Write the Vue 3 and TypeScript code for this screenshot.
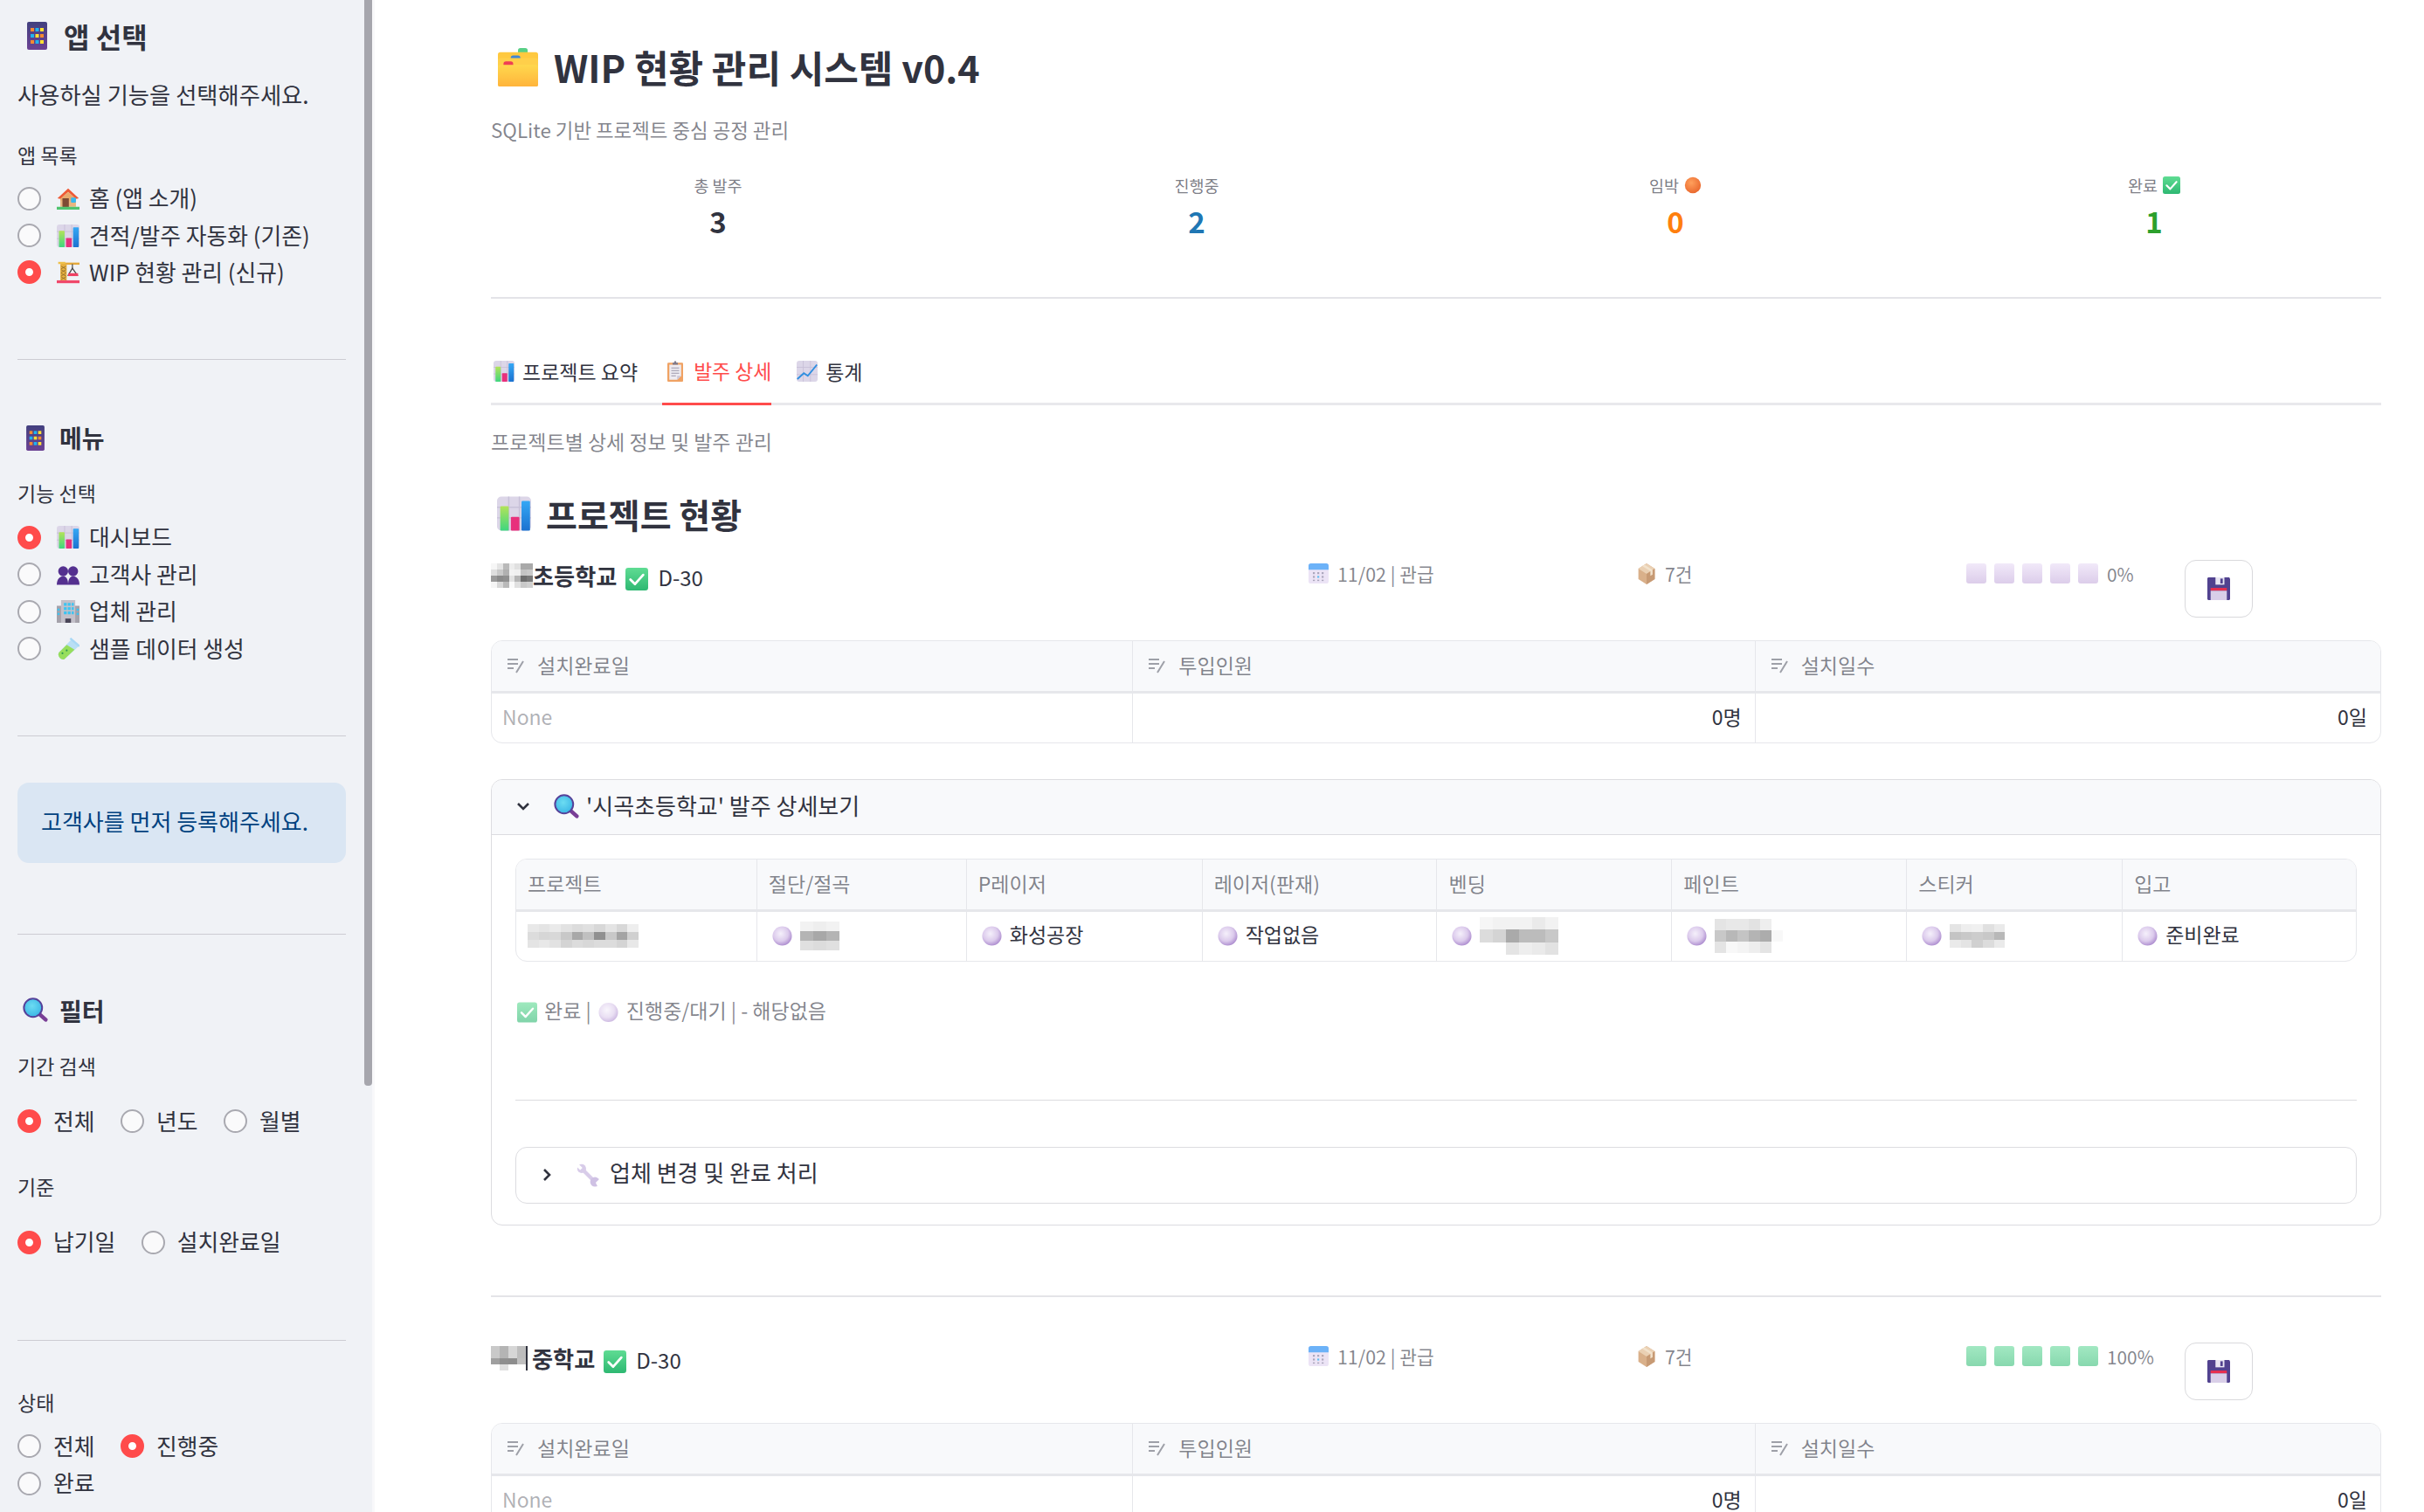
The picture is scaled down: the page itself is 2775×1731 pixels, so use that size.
<script setup lang="ts">
interface Mosaic { cols: number; w: number; h: number; cells: string[] }
const g = (v: string[]) => v.map((c) => '#' + c + c + c)

const nameA: Mosaic = { cols: 7, w: 48, h: 28, cells: g([
  'f6','e4','b9','ec','e0','a9','a9',
  'de','c9','b0','f3','f0','c4','c9',
  '9a','8a','8f','e2','b5','6e','7a',
  'f5','d8','b9','fa','e0','c9','d0']) }
const nameB: Mosaic = { cols: 4, w: 40, h: 28, cells: g([
  'c9','b4','d6','bd',
  'c9','b4','d6','bd',
  '9f','8f','8d','c0',
  'ff','e0','ff','ff']) }
const cProject: Mosaic = { cols: 10, w: 127, h: 27, cells: g([
  'e8','e4','ea','e2','dc','e0','d8','e4','d8','ee',
  'dc','d6','d8','c8','a8','c0','90','c8','a4','d0',
  'e4','e8','e2','d4','dc','d8','dc','dc','d4','e8']) }
const cCut: Mosaic = { cols: 3, w: 45, h: 33, cells: g([
  'f2','ee','f2',
  'b4','a8','b4',
  'e0','dc','e0']) }
const cBend: Mosaic = { cols: 6, w: 90, h: 43, cells: g([
  'f6','f2','f2','f2','ea','f2',
  'dc','d4','aa','bc','bc','c8',
  'ff','ff','e4','ee','ea','e2']) }
const cPaint: Mosaic = { cols: 6, w: 78, h: 39, cells: g([
  'e4','e8','e8','e2','ee','ff',
  'c8','b8','c4','b4','ac','f8',
  'e4','f8','f4','ee','e4','ff']) }
const cSticker: Mosaic = { cols: 5, w: 63, h: 27, cells: g([
  'e4','ee','f0','e0','ea',
  'c4','c8','cc','c8','b8',
  'ea','e4','d0','dc','ea']) }

interface StageCell { label: string; text?: string; mosaic?: Mosaic; icon?: boolean }
const stages: StageCell[] = [
  { label: '프로젝트', mosaic: cProject },
  { label: '절단/절곡', mosaic: cCut, icon: true },
  { label: 'P레이저', text: '화성공장', icon: true },
  { label: '레이저(판재)', text: '작업없음', icon: true },
  { label: '벤딩', mosaic: cBend, icon: true },
  { label: '페인트', mosaic: cPaint, icon: true },
  { label: '스티커', mosaic: cSticker, icon: true },
  { label: '입고', text: '준비완료', icon: true },
]
const summaryCols = ['설치완료일', '투입인원', '설치일수']
const metrics = [
  { label: '총 발주', value: '3', cls: 'v-dark' },
  { label: '진행중', value: '2', cls: 'v-blue' },
  { label: '임박', value: '0', cls: 'v-orange', icon: 'orange' },
  { label: '완료', value: '1', cls: 'v-green', icon: 'check' },
]
const mosaicStyle = (m: Mosaic) => ({
  width: m.w + 'px',
  height: m.h + 'px',
  gridTemplateColumns: `repeat(${m.cols}, 1fr)`,
})
</script>

<template>
  <div class="page">
    <svg class="defs" aria-hidden="true">
      <defs>
        <linearGradient id="gAb" x1="0" y1="0" x2="0" y2="1"><stop offset="0" stop-color="#42407f"/><stop offset="1" stop-color="#6b4193"/></linearGradient>
        <linearGradient id="gGreen" x1="0" y1="0" x2="0" y2="1"><stop offset="0" stop-color="#5fdc93"/><stop offset="1" stop-color="#2eb872"/></linearGradient>
        <linearGradient id="gBlue" x1="0" y1="0" x2="0" y2="1"><stop offset="0" stop-color="#35a8f5"/><stop offset="1" stop-color="#1b72d0"/></linearGradient>
        <linearGradient id="gLime" x1="0" y1="0" x2="0" y2="1"><stop offset="0" stop-color="#b2e35a"/><stop offset="1" stop-color="#3fd67f"/></linearGradient>
        <linearGradient id="gFolder" x1="0" y1="0" x2="0" y2="1"><stop offset="0" stop-color="#ffd84d"/><stop offset="1" stop-color="#ffb43c"/></linearGradient>
        <radialGradient id="gPurple" cx=".42" cy=".38" r=".65"><stop offset="0" stop-color="#f5f0fb"/><stop offset=".6" stop-color="#dccbec"/><stop offset="1" stop-color="#ab8ace"/></radialGradient>
        <radialGradient id="gOrange" cx=".4" cy=".35" r=".7"><stop offset="0" stop-color="#ffa05c"/><stop offset="1" stop-color="#e9662c"/></radialGradient>
        <radialGradient id="gGlass" cx=".45" cy=".4" r=".6"><stop offset="0" stop-color="#6cdcf2"/><stop offset="1" stop-color="#3cb7e6"/></radialGradient>
      </defs>
      <symbol id="abacus" viewBox="0 0 23 32">
        <rect width="23" height="32" rx="2" fill="url(#gAb)"/>
        <g><rect x="4" y="7" width="4" height="4" fill="#f58a32"/><rect x="9.5" y="7" width="4" height="4" fill="#1fb4ef"/><rect x="15" y="7" width="4" height="4" fill="#ffe033"/>
        <rect x="4" y="14" width="4" height="4" fill="#1fb4ef"/><rect x="9.5" y="14" width="4" height="4" fill="#ffe033"/><rect x="15" y="14" width="4" height="4" fill="#f58a32"/>
        <rect x="4" y="21" width="4" height="4" fill="#f58a32"/><rect x="9.5" y="21" width="4" height="4" fill="#1fb4ef"/><rect x="15" y="21" width="4" height="4" fill="#ffe033"/></g>
      </symbol>
      <symbol id="house" viewBox="0 0 32 32">
        <rect x="5" y="13" width="22" height="15" fill="#e8b57f"/>
        <path d="M16 2 L31 16 L27 17 L16 7 L5 17 L1 16 Z" fill="#ee5a36"/>
        <path d="M16 7 L27 17 L27 19 L5 19 L5 17 Z" fill="#e9aa6e"/>
        <rect x="8" y="16" width="9" height="13" fill="#7e4a34"/>
        <rect x="20" y="15" width="7" height="7" rx="1" fill="#37b8ee"/>
        <rect x="0" y="28" width="32" height="4" fill="#4fc46e"/>
      </symbol>
      <symbol id="bars" viewBox="0 0 32 32">
        <rect width="32" height="32" rx="4" fill="#dcd6e8"/>
        <path d="M0 10H32M0 20H32M11 0V32M21 0V32" stroke="#c8c1d8" stroke-width="1.2"/>
        <rect x="3" y="9" width="8" height="23" rx="1" fill="url(#gLime)"/>
        <rect x="13" y="19" width="8" height="13" rx="1" fill="#e8307c"/>
        <rect x="23" y="4" width="8" height="28" rx="1" fill="url(#gBlue)"/>
      </symbol>
      <symbol id="crane" viewBox="0 0 32 32">
        <rect x="6" y="2" width="26" height="3" fill="#e4a93c"/>
        <rect x="2" y="1" width="10" height="3" fill="#eec04a"/>
        <rect x="5" y="4" width="9" height="23" fill="#e8b13f"/>
        <path d="M6 7l7 4M13 7l-7 4M6 12l7 4M13 12l-7 4M6 17l7 4M13 17l-7 4M6 22l7 4M13 22l-7 4" stroke="#8c6a2c" stroke-width="1"/>
        <path d="M22 4V10" stroke="#555" stroke-width="1.6"/>
        <path d="M22 10L16 20H29Z" fill="none" stroke="#444" stroke-width="1.5"/>
        <rect x="16" y="17" width="14" height="4" fill="#ef4063"/>
        <rect x="0" y="27" width="32" height="4" fill="#f0486a"/>
      </symbol>
      <symbol id="people" viewBox="0 0 32 32">
        <g fill="#54308f"><circle cx="9" cy="11" r="7"/><circle cx="23" cy="11" r="7"/>
        <path d="M0 30 C0 21 5 18 9 18 C13 18 16 21 16 30Z"/><path d="M16 30 C16 21 19 18 23 18 C27 18 32 21 32 30Z"/></g>
      </symbol>
      <symbol id="office" viewBox="0 0 32 32">
        <rect y="8" width="32" height="24" fill="#a5a2ab"/>
        <rect x="6" width="20" height="32" fill="#c3c0c9"/>
        <g fill="#3cc4f2"><rect x="10" y="4" width="4" height="4"/><rect x="15.5" y="4" width="4" height="4"/><rect x="21" y="4" width="3" height="4"/>
        <rect x="10" y="10" width="4" height="4"/><rect x="15.5" y="10" width="4" height="4"/><rect x="21" y="10" width="3" height="4"/>
        <rect x="10" y="16" width="4" height="4"/><rect x="15.5" y="16" width="4" height="4"/><rect x="21" y="16" width="3" height="4"/>
        <rect x="1" y="12" width="3" height="3"/><rect x="1" y="18" width="3" height="3"/><rect x="28" y="12" width="3" height="3"/><rect x="28" y="18" width="3" height="3"/></g>
        <rect x="12" y="26" width="8" height="6" fill="#4a4658"/>
      </symbol>
      <symbol id="tube" viewBox="0 0 32 32">
        <path d="M21 2 L31 12 L11 30 C7 33 0 26 3 21 Z" fill="#b9dff5"/>
        <path d="M14 10 L25 17 L11 30 C7 33 0 26 3 21 Z" fill="#97de5c"/>
        <path d="M19 1 L32 12" stroke="#a8d8f5" stroke-width="3"/>
        <g fill="#2e9a50"><circle cx="8" cy="22" r="1.3"/><circle cx="14" cy="18" r="1.3"/></g>
      </symbol>
      <symbol id="magnifier" viewBox="0 0 32 32">
        <path d="M20 20 L29 28" stroke="#7a3f96" stroke-width="5" stroke-linecap="round"/>
        <circle cx="13" cy="13" r="11.5" fill="url(#gGlass)" stroke="#56429a" stroke-width="2.2"/>
      </symbol>
      <symbol id="folder" viewBox="0 0 50 46" preserveAspectRatio="none">
        <rect x="25" y="0" width="12" height="8" rx="3" fill="#58cf86"/>
        <rect x="0" y="5" width="50" height="41" rx="3" fill="#ffc93f"/>
        <rect x="16" y="9" width="12" height="7" rx="3" fill="#3f86d6"/>
        <rect x="0" y="12" width="50" height="34" rx="3" fill="#ffcf4a"/>
        <rect x="7" y="16" width="12" height="7" rx="3" fill="#ef3f55"/>
        <rect x="0" y="20" width="50" height="26" rx="3" fill="url(#gFolder)"/>
      </symbol>
      <symbol id="clipboard" viewBox="0 0 32 32">
        <rect x="4" y="3" width="24" height="29" rx="1.5" fill="#f0a263"/>
        <path d="M7 6H25V23L19 29H7Z" fill="#eeecf2"/>
        <path d="M19 29L25 23H19Z" fill="#cbc5d6"/>
        <path d="M10 11H22M10 15H22M10 19H22M10 23H17" stroke="#9c96ab" stroke-width="1.4"/>
        <path d="M12 6V3H14.5V0.5H17.5V3H20V6Z" fill="#7d7a8c"/>
      </symbol>
      <symbol id="chart" viewBox="0 0 32 32">
        <rect width="32" height="32" rx="4" fill="#dcd6e8"/>
        <path d="M0 10H32M0 21H32M10 0V32M21 0V32" stroke="#c8c1d8" stroke-width="1.2"/>
        <path d="M1 28 L11 19 L17 23 L31 6" fill="none" stroke="#2f8fe0" stroke-width="2.6"/>
      </symbol>
      <symbol id="check" viewBox="0 0 32 32">
        <rect width="32" height="32" rx="4" fill="url(#gGreen)"/>
        <path d="M7 16.5 L13.5 23 L25 10" fill="none" stroke="#fff" stroke-width="3.4" stroke-linecap="round" stroke-linejoin="round"/>
      </symbol>
      <symbol id="calendar" viewBox="0 0 32 32">
        <rect width="32" height="32" rx="4" fill="#ece4f6"/>
        <path d="M0 10V4a4 4 0 0 1 4-4H28a4 4 0 0 1 4 4V10Z" fill="#6cb2f8"/>
        <g fill="#a9a4ba"><rect x="7" y="14" width="3" height="3"/><rect x="14" y="14" width="3" height="3"/><rect x="21" y="14" width="3" height="3"/>
        <rect x="7" y="20" width="3" height="3"/><rect x="14" y="20" width="3" height="3" fill="#5fbdf0"/><rect x="21" y="20" width="3" height="3"/>
        <rect x="7" y="26" width="3" height="2"/><rect x="14" y="26" width="3" height="2"/><rect x="21" y="26" width="3" height="2"/></g>
      </symbol>
      <symbol id="box" viewBox="0 0 32 32" preserveAspectRatio="none">
        <path d="M16 0 L31 8 V24 L16 32 L1 24 V8 Z" fill="#d9b08a"/>
        <path d="M1 8 L16 16 L31 8 L16 0Z" fill="#ead0b3"/>
        <path d="M16 16 V32 L31 24 V8Z" fill="#c79a74"/>
        <path d="M8 4 L23 12 V19 L27 17 V10 L12 2Z" fill="#f2e2cc"/>
      </symbol>
      <symbol id="save" viewBox="0 0 28 28">
        <path d="M1 0H27L28 2V27L27 28H1L0 27V1Z" fill="#51428f"/>
        <rect x="10" y="0" width="11" height="9" fill="#e9e6f3"/><rect x="16" y="1.5" width="3" height="6" fill="#51428f"/>
        <rect x="4" y="13" width="20" height="3.5" fill="#e8304f"/>
        <rect x="4" y="16.5" width="20" height="11.5" fill="#d9cfe8"/>
      </symbol>
      <symbol id="purple" viewBox="0 0 24 24"><circle cx="12" cy="12" r="11.5" fill="url(#gPurple)"/></symbol>
      <symbol id="orange" viewBox="0 0 24 24"><circle cx="12" cy="12" r="11" fill="url(#gOrange)"/></symbol>
      <symbol id="wrench" viewBox="0 0 32 32">
        <path d="M8 8L24 24" stroke="#d8cce9" stroke-width="5" fill="none"/>
        <circle cx="7" cy="7" r="6" fill="#d8cce9"/>
        <circle cx="25" cy="25" r="6.5" fill="#cfc1e4"/>
        <path d="M1 -1L8 6L5 9L-2 2Z" fill="#fff"/>
        <path d="M32 20L26 26L29 32L33 32Z" fill="#fff"/>
      </symbol>
    </svg>

    <aside class="sidebar">
      <div class="thumb"></div>
      <h2 class="side-h big"><svg class="abacus-big"><use href="#abacus"/></svg>앱 선택</h2>
      <p class="side-p">사용하실 기능을 선택해주세요.</p>
      <div class="side-label l1">앱 목록</div>
      <div class="radios">
        <label class="radio"><i class="dot"></i><svg class="e"><use href="#house"/></svg>홈 (앱 소개)</label>
        <label class="radio"><i class="dot"></i><svg class="e"><use href="#bars"/></svg>견적/발주 자동화 (기존)</label>
        <label class="radio"><i class="dot on"></i><svg class="e"><use href="#crane"/></svg>WIP 현황 관리 (신규)</label>
      </div>
      <hr class="side-hr h1">
      <h2 class="side-h mid menu"><svg class="abacus-small"><use href="#abacus"/></svg>메뉴</h2>
      <div class="side-label l2">기능 선택</div>
      <div class="radios r2">
        <label class="radio"><i class="dot on"></i><svg class="e"><use href="#bars"/></svg>대시보드</label>
        <label class="radio"><i class="dot"></i><svg class="e"><use href="#people"/></svg>고객사 관리</label>
        <label class="radio"><i class="dot"></i><svg class="e"><use href="#office"/></svg>업체 관리</label>
        <label class="radio"><i class="dot"></i><svg class="e"><use href="#tube"/></svg>샘플 데이터 생성</label>
      </div>
      <hr class="side-hr h2r">
      <div class="info">고객사를 먼저 등록해주세요.</div>
      <hr class="side-hr h3">
      <h2 class="side-h mid filter"><svg class="mag"><use href="#magnifier"/></svg>필터</h2>
      <div class="side-label l3">기간 검색</div>
      <div class="radios inline r3">
        <label class="radio"><i class="dot on"></i>전체</label>
        <label class="radio"><i class="dot"></i>년도</label>
        <label class="radio"><i class="dot"></i>월별</label>
      </div>
      <div class="side-label l4">기준</div>
      <div class="radios inline r3">
        <label class="radio"><i class="dot on"></i>납기일</label>
        <label class="radio"><i class="dot"></i>설치완료일</label>
      </div>
      <hr class="side-hr h4">
      <div class="side-label l5">상태</div>
      <div class="radios inline r2 status">
        <label class="radio"><i class="dot"></i>전체</label>
        <label class="radio"><i class="dot on"></i>진행중</label>
        <label class="radio"><i class="dot"></i>완료</label>
      </div>
    </aside>

    <main class="main">
      <h1 class="title"><svg class="folder"><use href="#folder"/></svg>WIP 현황 관리 시스템 v0.4</h1>
      <p class="caption sub">SQLite 기반 프로젝트 중심 공정 관리</p>

      <section class="metrics">
        <div v-for="m in metrics" :key="m.label" class="metric">
          <div class="m-label">{{ m.label }}<svg v-if="m.icon" class="m-icon"><use :href="'#' + m.icon"/></svg></div>
          <div class="m-value" :class="m.cls">{{ m.value }}</div>
        </div>
      </section>
      <hr class="rule metrics-rule">

      <nav class="tabs">
        <div class="tab"><svg class="tab-i"><use href="#bars"/></svg>프로젝트 요약</div>
        <div class="tab active"><svg class="tab-i"><use href="#clipboard"/></svg>발주 상세</div>
        <div class="tab"><svg class="tab-i"><use href="#chart"/></svg>통계</div>
      </nav>
      <p class="caption tabcap">프로젝트별 상세 정보 및 발주 관리</p>

      <h2 class="section"><svg class="sec-i"><use href="#bars"/></svg>프로젝트 현황</h2>

      <!-- project 1 -->
      <div class="prow">
        <div class="pname">
          <span class="mosaic" :style="mosaicStyle(nameA)"><i v-for="(c, i) in nameA.cells" :key="i" :style="{ background: c }"></i></span>
          <b>초등학교</b><svg class="p-check"><use href="#check"/></svg><span class="dday">D-30</span>
        </div>
        <div class="pmeta"><svg class="pm-i"><use href="#calendar"/></svg>11/02 | 관급</div>
        <div class="pmeta"><svg class="pm-i pm-box"><use href="#box"/></svg>7건</div>
        <div class="pmeta prog">
          <span class="pips"><i v-for="n in 5" :key="n" class="pip"></i></span>0%
        </div>
        <button class="save"><svg><use href="#save"/></svg></button>
      </div>

      <div class="sumtable">
        <div v-for="c in summaryCols" :key="c" class="sum-h">
          <svg class="edit" viewBox="0 0 24 24"><path d="M3 6h12M3 11h12M3 16h7M21 8 13 21" fill="none" stroke="currentColor" stroke-width="2"/></svg>{{ c }}
        </div>
        <div class="sum-c none">None</div>
        <div class="sum-c num">0명</div>
        <div class="sum-c num">0일</div>
      </div>

      <section class="expander">
        <header class="exp-head">
          <svg class="chev" viewBox="0 0 24 24"><path d="M6 9l6 6 6-6" fill="none" stroke="currentColor" stroke-width="2.6"/></svg>
          <svg class="exp-i"><use href="#magnifier"/></svg>'시곡초등학교' 발주 상세보기
        </header>
        <div class="exp-body">
          <div class="stagetable">
            <div v-for="s in stages" :key="s.label" class="st-h">{{ s.label }}</div>
            <div v-for="s in stages" :key="s.label + 'c'" class="st-c">
              <svg v-if="s.icon" class="st-i"><use href="#purple"/></svg>
              <span v-if="s.mosaic" class="mosaic" :style="mosaicStyle(s.mosaic)"><i v-for="(c, i) in s.mosaic.cells" :key="i" :style="{ background: c }"></i></span>
              <template v-else>{{ s.text }}</template>
            </div>
          </div>
          <p class="legend"><svg class="lg-i"><use href="#check"/></svg>완료 | <svg class="lg-i round"><use href="#purple"/></svg>진행중/대기 | - 해당없음</p>
          <hr class="rule inner-rule">
          <div class="subexp">
            <svg class="chev right" viewBox="0 0 24 24"><path d="M9 6l6 6-6 6" fill="none" stroke="currentColor" stroke-width="2.6"/></svg>
            <svg class="wrench"><use href="#wrench"/></svg>업체 변경 및 완료 처리
          </div>
        </div>
      </section>

      <hr class="rule project-rule">

      <!-- project 2 -->
      <div class="prow">
        <div class="pname">
          <span class="mosaic bar" :style="mosaicStyle(nameB)"><i v-for="(c, i) in nameB.cells" :key="i" :style="{ background: c }"></i></span>
          <b>중학교</b><svg class="p-check"><use href="#check"/></svg><span class="dday">D-30</span>
        </div>
        <div class="pmeta"><svg class="pm-i"><use href="#calendar"/></svg>11/02 | 관급</div>
        <div class="pmeta"><svg class="pm-i pm-box"><use href="#box"/></svg>7건</div>
        <div class="pmeta prog">
          <span class="pips"><i v-for="n in 5" :key="n" class="pip done"></i></span>100%
        </div>
        <button class="save"><svg><use href="#save"/></svg></button>
      </div>

      <div class="sumtable">
        <div v-for="c in summaryCols" :key="c" class="sum-h">
          <svg class="edit" viewBox="0 0 24 24"><path d="M3 6h12M3 11h12M3 16h7M21 8 13 21" fill="none" stroke="currentColor" stroke-width="2"/></svg>{{ c }}
        </div>
        <div class="sum-c none">None</div>
        <div class="sum-c num">0명</div>
        <div class="sum-c num">0일</div>
      </div>
    </main>
  </div>
</template>

<style>
html, body { margin: 0; background: #fff; overflow: hidden; }
</style>

<style scoped>
.page {
  display: flex;
  width: 2775px;
  height: 1731px;
  overflow: hidden;
  background: #fff;
  color: #31333f;
  font-family: "Noto Sans CJK KR", "Noto Sans", sans-serif;
}
.defs { position: absolute; width: 0; height: 0; overflow: hidden; }
svg { display: block; flex: none; }

/* sidebar */
.sidebar {
  position: relative;
  flex: none;
  box-sizing: border-box;
  width: 429px;
  height: 100%;
  padding: 18px 30px 0 20px;
  background: #f0f2f6;
  border-right: 3px solid #f8f8fa;
}
.thumb {
  position: absolute;
  left: 417px;
  top: 0;
  width: 9px;
  height: 1243px;
  background: #a6a6ad;
  border-radius: 0 0 4px 4px;
}
.side-h { display: flex; align-items: center; margin: 0; font-weight: 700; }
.side-h.big { height: 46px; font-size: 32px; line-height: 46px; }
.side-h.mid { height: 42px; font-size: 28px; line-height: 42px; }
.abacus-big { width: 23px; height: 32px; margin: 0 19px 0 11px; }
.abacus-small { width: 21px; height: 29px; margin: 0 17px 0 10px; }
.mag { width: 29px; height: 29px; margin: 0 13px 0 6px; }
.side-p { margin: 26px 0 0; font-size: 26.3px; line-height: 36px; height: 36px; }
.side-label { font-size: 23px; line-height: 32px; height: 32px; }
.l1 { margin-top: 35px; }
.l2 { margin-top: 26px; }
.l3 { margin-top: 26px; }
.l4 { margin-top: 37px; }
.l5 { margin-top: 54px; }
.menu { margin-top: 68px; }
.filter { margin-top: 66px; }
.radios { display: flex; flex-direction: column; margin-top: 13px; }
.radios.r2 { margin-top: 14px; }
.radios.r3 { margin-top: 27px; }
.radios.inline { flex-direction: row; flex-wrap: wrap; column-gap: 29.5px; }
.radios.status { max-width: 340px; }
.radio {
  display: flex;
  align-items: center;
  box-sizing: border-box;
  height: 42.4px;
  padding-bottom: 3px;
  font-size: 25.8px;
  white-space: nowrap;
}
.dot {
  box-sizing: border-box;
  flex: none;
  width: 27px;
  height: 27px;
  margin: 3px 14px 0 0;
  border: 2px solid #a9a9b0;
  border-radius: 50%;
  background: #fafafb;
}
.dot.on { border: 9px solid #ff4b4b; background: #fff; }
.e { width: 26px; height: 26px; margin: 3px 11px 0 4px; }
.side-hr { margin: 0; border: 0; border-top: 1px solid #ccccd2; }
.h1 { margin-top: 78px; }
.h2r { margin-top: 78px; }
.h3 { margin-top: 81px; }
.h4 { margin-top: 90px; }
.info {
  box-sizing: border-box;
  height: 92px;
  margin-top: 53px;
  padding-left: 27px;
  border-radius: 13px;
  background: #dae6f3;
  color: #004280;
  font-size: 26px;
  line-height: 87px;
}

/* main */
.main { flex: 1; min-width: 0; padding: 45.5px 49px 0 133px; }
.title {
  display: flex;
  align-items: center;
  height: 60px;
  margin: 0;
  font-size: 43px;
  font-weight: 700;
  line-height: 60px;
}
.folder { width: 46px; height: 44px; margin: 2px 18px 0 8px; }
.caption { margin: 0; color: rgba(49, 51, 63, .6); font-size: 23px; line-height: 32px; height: 32px; }
.sub { margin-top: 26px; font-size: 22.4px; }
.metrics { display: grid; grid-template-columns: repeat(4, 1fr); column-gap: 28px; margin-top: 33.5px; }
.metric { text-align: center; }
.m-label {
  display: flex;
  justify-content: center;
  align-items: center;
  gap: 6px;
  height: 30px;
  color: rgba(49, 51, 63, .65);
  font-size: 18.5px;
  line-height: 30px;
}
.m-icon { width: 20px; height: 20px; }
.m-value { margin-top: 3px; height: 46px; font-size: 33px; font-weight: 700; line-height: 46px; }
.v-dark { color: #31333f; }
.v-blue { color: #1f77b4; }
.v-orange { color: #ff7f0e; }
.v-green { color: #2ca02c; }
.rule { margin: 0; border: 0; border-top: 2px solid #e4e4e8; }
.metrics-rule { margin-top: 64px; }

.tabs { display: flex; gap: 28px; height: 60px; margin-top: 62px; border-bottom: 3px solid #e8e8ec; box-sizing: border-box; }
.tab {
  display: flex;
  align-items: flex-start;
  height: 60px;
  box-sizing: border-box;
  font-size: 23px;
  line-height: 42px;
  white-space: nowrap;
}
.tab.active { color: #ff4b4b; border-bottom: 3px solid #ff4b4b; font-size: 22.8px; }
.tab-i { width: 24px; height: 24px; margin: 9px 9px 0 3px; }
.tab.active .tab-i { margin-left: 3px; margin-right: 9px; }
.tab.active + .tab { margin-left: -2px; }
.tabcap { margin-top: 25px; }
.section {
  display: flex;
  align-items: center;
  height: 52px;
  margin: 40.5px 0 0;
  font-size: 39px;
  font-weight: 700;
}
.sec-i { width: 39px; height: 40px; margin: 0 17px 0 7px; }

.prow {
  display: grid;
  grid-template-columns: 936fr 375fr 378fr 250fr 225fr;
  align-items: start;
  height: 66px;
  margin-top: 27px;
}
.pname { display: flex; align-items: center; height: 36px; }
.pname b { font-size: 26.2px; font-weight: 700; line-height: 36px; }
.p-check { width: 26px; height: 28px; margin: 8px 11px 0 10px; }
.dday { margin-top: 4px; font-size: 24px; }
.pmeta {
  display: flex;
  align-items: center;
  height: 32px;
  color: rgba(49, 51, 63, .6);
  font-size: 21.4px;
  line-height: 32px;
  white-space: pre;
}
.pmeta.prog { font-size: 20.8px; }
.pm-i { width: 23px; height: 23px; margin-right: 10px; }
.pm-box { width: 20px; height: 24px; margin: 0 11px 0 2px; }
.pips { display: flex; gap: 9px; margin-right: 10px; }
.pip {
  display: block;
  width: 23px;
  height: 23px;
  border-radius: 3px;
  background: linear-gradient(#f1e9f9, #dccdea);
}
.pip.done { background: linear-gradient(#a2e8c2, #87d8ae); }
.save {
  box-sizing: border-box;
  display: flex;
  align-items: center;
  justify-content: center;
  width: 78px;
  height: 66px;
  padding: 0;
  border: 1px solid #d9d9dc;
  border-radius: 13px;
  background: #fff;
}
.save svg { width: 26px; height: 26px; }

.sumtable {
  display: grid;
  grid-template-columns: 735fr 713fr 716fr;
  margin-top: 26px;
  overflow: hidden;
  border: 1px solid #e6e7eb;
  border-radius: 13px;
}
.sum-h {
  display: flex;
  align-items: center;
  box-sizing: border-box;
  height: 60px;
  padding: 0 0 3px 15px;
  background: #f8f9fb;
  border-bottom: 3px solid #e6e7eb;
  border-right: 1px solid #e6e7eb;
  color: rgba(49, 51, 63, .6);
  font-size: 23px;
}
.sum-h:nth-child(3) { border-right: 0; }
.edit { width: 24px; height: 24px; margin-right: 13px; color: #9ea0a8; }
.sum-c {
  box-sizing: border-box;
  height: 56px;
  padding: 12px 15px 0;
  border-right: 1px solid #e6e7eb;
  font-size: 23px;
  line-height: 28px;
}
.sum-c:last-child { border-right: 0; }
.none { padding-left: 12px; color: rgba(49, 51, 63, .4); }
.num { text-align: right; }

.expander {
  box-sizing: border-box;
  height: 511px;
  margin-top: 41px;
  border: 1px solid #dcdce0;
  border-radius: 13px;
  overflow: hidden;
}
.exp-head {
  display: flex;
  align-items: center;
  box-sizing: border-box;
  height: 63px;
  padding: 0 0 4px 24px;
  background: #f8f9fb;
  border-bottom: 1px solid #dcdce0;
  font-size: 26px;
}
.chev { width: 24px; height: 24px; color: #31333f; }
.exp-i { width: 29px; height: 29px; margin: 3px 8px 0 23px; }
.exp-head .chev { margin-top: 3px; }
.exp-body { padding: 27px 27px 0; }
.stagetable {
  display: grid;
  grid-template-columns: 276fr 240fr 270fr 269fr 269fr 269fr 247fr 267fr;
  overflow: hidden;
  border: 1px solid #e6e7eb;
  border-radius: 13px;
}
.st-h {
  box-sizing: border-box;
  height: 60px;
  padding: 0 13px;
  background: #f8f9fb;
  border-bottom: 3px solid #e6e7eb;
  border-right: 1px solid #e6e7eb;
  color: rgba(49, 51, 63, .6);
  font-size: 23px;
  line-height: 54px;
}
.st-h:nth-child(8) { border-right: 0; }
.st-c {
  display: flex;
  align-items: center;
  box-sizing: border-box;
  height: 56px;
  padding: 0 13px 5px;
  border-right: 1px solid #e6e7eb;
  font-size: 23px;
  white-space: nowrap;
}
.st-c:last-child { border-right: 0; }
.st-i { width: 23px; height: 23px; margin: 5px 9px 0 4px; }
.mosaic { display: grid; flex: none; grid-auto-rows: 1fr; }
.st-c .mosaic { margin-top: 5px; }
.mosaic i { display: block; }
.mosaic.bar { border-right: 2px solid #31333f; box-sizing: content-box; margin-right: 5px; }
.legend {
  display: flex;
  align-items: center;
  height: 32px;
  margin: 39.5px 0 0;
  padding-bottom: 5px;
  box-sizing: content-box;
  color: rgba(49, 51, 63, .6);
  font-size: 23px;
  white-space: pre;
}
.lg-i { width: 23px; height: 24px; margin: 5px 8px 0 2px; opacity: .6; }
.lg-i.round { margin: 5px 9px 0 3px; }
.inner-rule { margin-top: 81.5px; border-top-width: 1px; border-color: #dcdce0; }
.subexp {
  display: flex;
  align-items: center;
  box-sizing: border-box;
  height: 65px;
  margin-top: 53px;
  padding: 0 0 8px 23px;
  border: 1px solid #dcdce0;
  border-radius: 13px;
  font-size: 26px;
}
.chev.right { width: 24px; height: 24px; margin-top: 8px; }
.wrench { width: 27px; height: 27px; margin: 8px 11px 0 22px; }
.project-rule { margin-top: 80px; }
.project-rule + .prow { margin-top: 52px; }
</style>
